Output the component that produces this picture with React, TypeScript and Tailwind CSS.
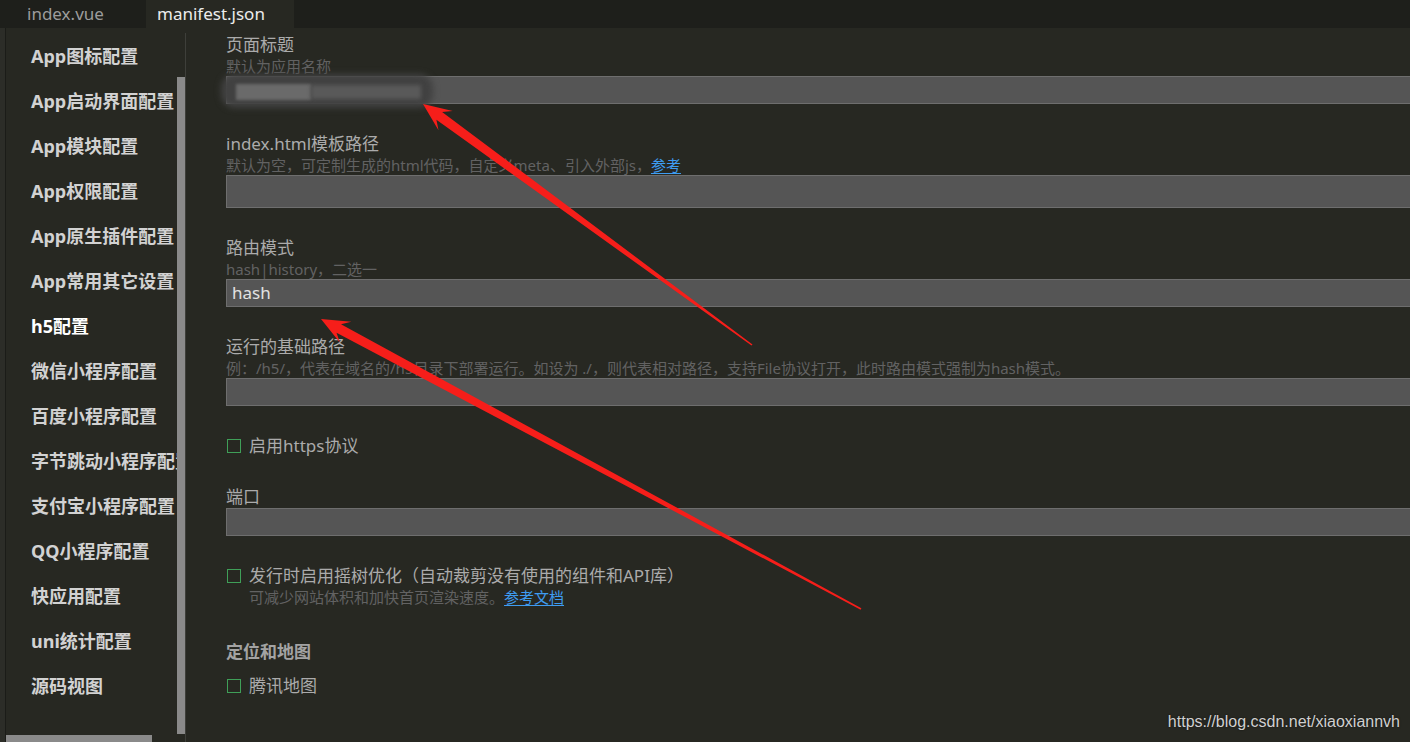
import React from 'react';

const navItems = [
  'App图标配置',
  'App启动界面配置',
  'App模块配置',
  'App权限配置',
  'App原生插件配置',
  'App常用其它设置',
  'h5配置',
  '微信小程序配置',
  '百度小程序配置',
  '字节跳动小程序配置',
  '支付宝小程序配置',
  'QQ小程序配置',
  '快应用配置',
  'uni统计配置',
  '源码视图',
];

// tapered screenshot-tool style arrow, tail -> tip
function arrowPoints(tx: number, ty: number, px: number, py: number) {
  const len = Math.hypot(px - tx, py - ty);
  const dx = (px - tx) / len;
  const dy = (py - ty) / len;
  const nx = -dy;
  const ny = dx;
  const L = 28;
  const W = 12;
  const bx = px - dx * L;
  const by = py - dy * L;
  const kx = px - dx * L * 0.72;
  const ky = py - dy * L * 0.72;
  const pts = [
    [tx + nx * 0.8, ty + ny * 0.8],
    [kx + nx * 4.8, ky + ny * 4.8],
    [bx + nx * W, by + ny * W],
    [px, py],
    [bx - nx * W, by - ny * W],
    [kx - nx * 4.8, ky - ny * 4.8],
    [tx - nx * 0.8, ty - ny * 0.8],
  ];
  return pts.map((p) => `${p[0].toFixed(1)},${p[1].toFixed(1)}`).join(' ');
}

const Label: React.FC<{ children: React.ReactNode; bold?: boolean }> = ({ children, bold }) => (
  <div className={`h-[22px] leading-[22px] text-[17px] whitespace-nowrap ${bold ? 'font-bold text-[#a3a3a3]' : 'text-[#ababab]'}`}>
    {children}
  </div>
);

const Hint: React.FC<{ children: React.ReactNode }> = ({ children }) => (
  <div className="h-[20px] leading-[20px] text-[15px] text-[#626262] whitespace-nowrap">{children}</div>
);

const Input: React.FC<{ h?: string; value?: string }> = ({ h = 'h-[28px]', value }) => (
  <div className={`${h} bg-[#555555] border border-[#6e6e6e] border-r-0 flex items-center pl-[5px] text-[17px] text-[#e2e2e2]`}>
    {value}
  </div>
);

const Check: React.FC<{ children: React.ReactNode }> = ({ children }) => (
  <div className="h-[22px] flex items-center">
    <div className="ml-[1px] w-[14px] h-[14px] border-[1.5px] border-[#3f9f58]"></div>
    <span className="ml-[8px] leading-[22px] text-[17px] text-[#ababab] whitespace-nowrap">{children}</span>
  </div>
);

const Link: React.FC<{ children: React.ReactNode }> = ({ children }) => (
  <span className="text-[#3e9cf2] underline underline-offset-2">{children}</span>
);

export default function App() {
  return (
    <div className="relative w-full h-[742px] overflow-hidden bg-[#272822] font-['Noto_Sans','Noto_Sans_CJK_SC',sans-serif] flex flex-col">
      {/* Tabs */}
      <div className="h-[28px] shrink-0 bg-[#1e1f1b] flex">
        <div className="w-[146px] pl-[27px] leading-[27px] text-[17px] text-[#9c9c9c]">index.vue</div>
        <div className="w-[148px] pl-[11px] leading-[27px] text-[17px] text-[#ececec] bg-[#272822]">manifest.json</div>
      </div>

      <div className="flex-1 flex min-h-0">
        {/* left gutter */}
        <div className="w-[6px] shrink-0 bg-[#2c2d28] border-r border-[#1b1c18]"></div>

        {/* Sidebar */}
        <div className="w-[171px] shrink-0 overflow-hidden flex flex-col">
          <div className="pt-[6px] pl-[25px]">
            {navItems.map((item) => (
              <div
                key={item}
                className={`h-[45px] leading-[45px] text-[18px] font-bold whitespace-nowrap ${item === 'h5配置' ? 'text-white' : 'text-[#d2d2d2]'}`}
              >
                {item}
              </div>
            ))}
          </div>
          <div className="mt-auto w-[146px] h-[7px] bg-[#8a8a8a]"></div>
        </div>
        <div className="w-[8px] shrink-0 pt-[49px] pb-[8px]">
          <div className="h-full bg-[#8a8a8a]"></div>
        </div>
        <div className="w-[1px] shrink-0 pt-[5px]">
          <div className="h-full bg-[#3e3f3a]"></div>
        </div>

        {/* Main */}
        <div className="flex-1 min-w-0 pl-[40px] pt-[6px] flex flex-col">
          <div>
            <Label>页面标题</Label>
            <Hint>默认为应用名称</Hint>
            <div className="relative">
              <Input />
              <div className="absolute left-[-5px] top-[-2px] w-[212px] h-[34px] rounded-[14px] bg-[#414141] blur-[3px]"></div>
              <div className="absolute left-[10px] top-[8px] w-[75px] h-[16px] bg-[#6a6a6a] blur-[1.5px]"></div>
              <div className="absolute left-[85px] top-[9px] w-[110px] h-[14px] bg-[#595959] blur-[2px]"></div>
            </div>
          </div>

          <div className="mt-[29px]">
            <Label>index.html模板路径</Label>
            <Hint>
              默认为空，可定制生成的html代码，自定义meta、引入外部js，<Link>参考</Link>
            </Hint>
            <Input h="h-[33px]" />
          </div>

          <div className="mt-[29px]">
            <Label>路由模式</Label>
            <Hint>hash|history，二选一</Hint>
            <Input value="hash" />
          </div>

          <div className="mt-[29px]">
            <Label>运行的基础路径</Label>
            <Hint>例：/h5/，代表在域名的/h5目录下部署运行。如设为 ./，则代表相对路径，支持File协议打开，此时路由模式强制为hash模式。</Hint>
            <Input />
          </div>

          <div className="mt-[29px]">
            <Check>启用https协议</Check>
          </div>

          <div className="mt-[29px]">
            <Label>端口</Label>
            <Input />
          </div>

          <div className="mt-[29px]">
            <Check>发行时启用摇树优化（自动裁剪没有使用的组件和API库）</Check>
            <div className="pl-[23px]">
              <Hint>
                可减少网站体积和加快首页渲染速度。<Link>参考文档</Link>
              </Hint>
            </div>
          </div>

          <div className="mt-[34px]">
            <Label bold>定位和地图</Label>
          </div>
          <div className="mt-[12px]">
            <Check>腾讯地图</Check>
          </div>
        </div>
      </div>

      {/* annotation arrows */}
      <svg className="absolute left-0 top-0 pointer-events-none" width={1410} height={742}>
        <polygon points={arrowPoints(752, 345, 423, 104)} fill="#f61e1a" />
        <polygon points={arrowPoints(861, 609, 321, 319)} fill="#f61e1a" />
      </svg>

      {/* watermark */}
      <div className="absolute right-[10px] bottom-[10px] leading-[20px] text-[16px] text-[#d0d0d0] font-['Liberation_Sans',Arial,sans-serif] [text-shadow:0_0_2px_rgba(0,0,0,0.6)]">
        https://blog.csdn.net/xiaoxiannvh
      </div>
    </div>
  );
}
